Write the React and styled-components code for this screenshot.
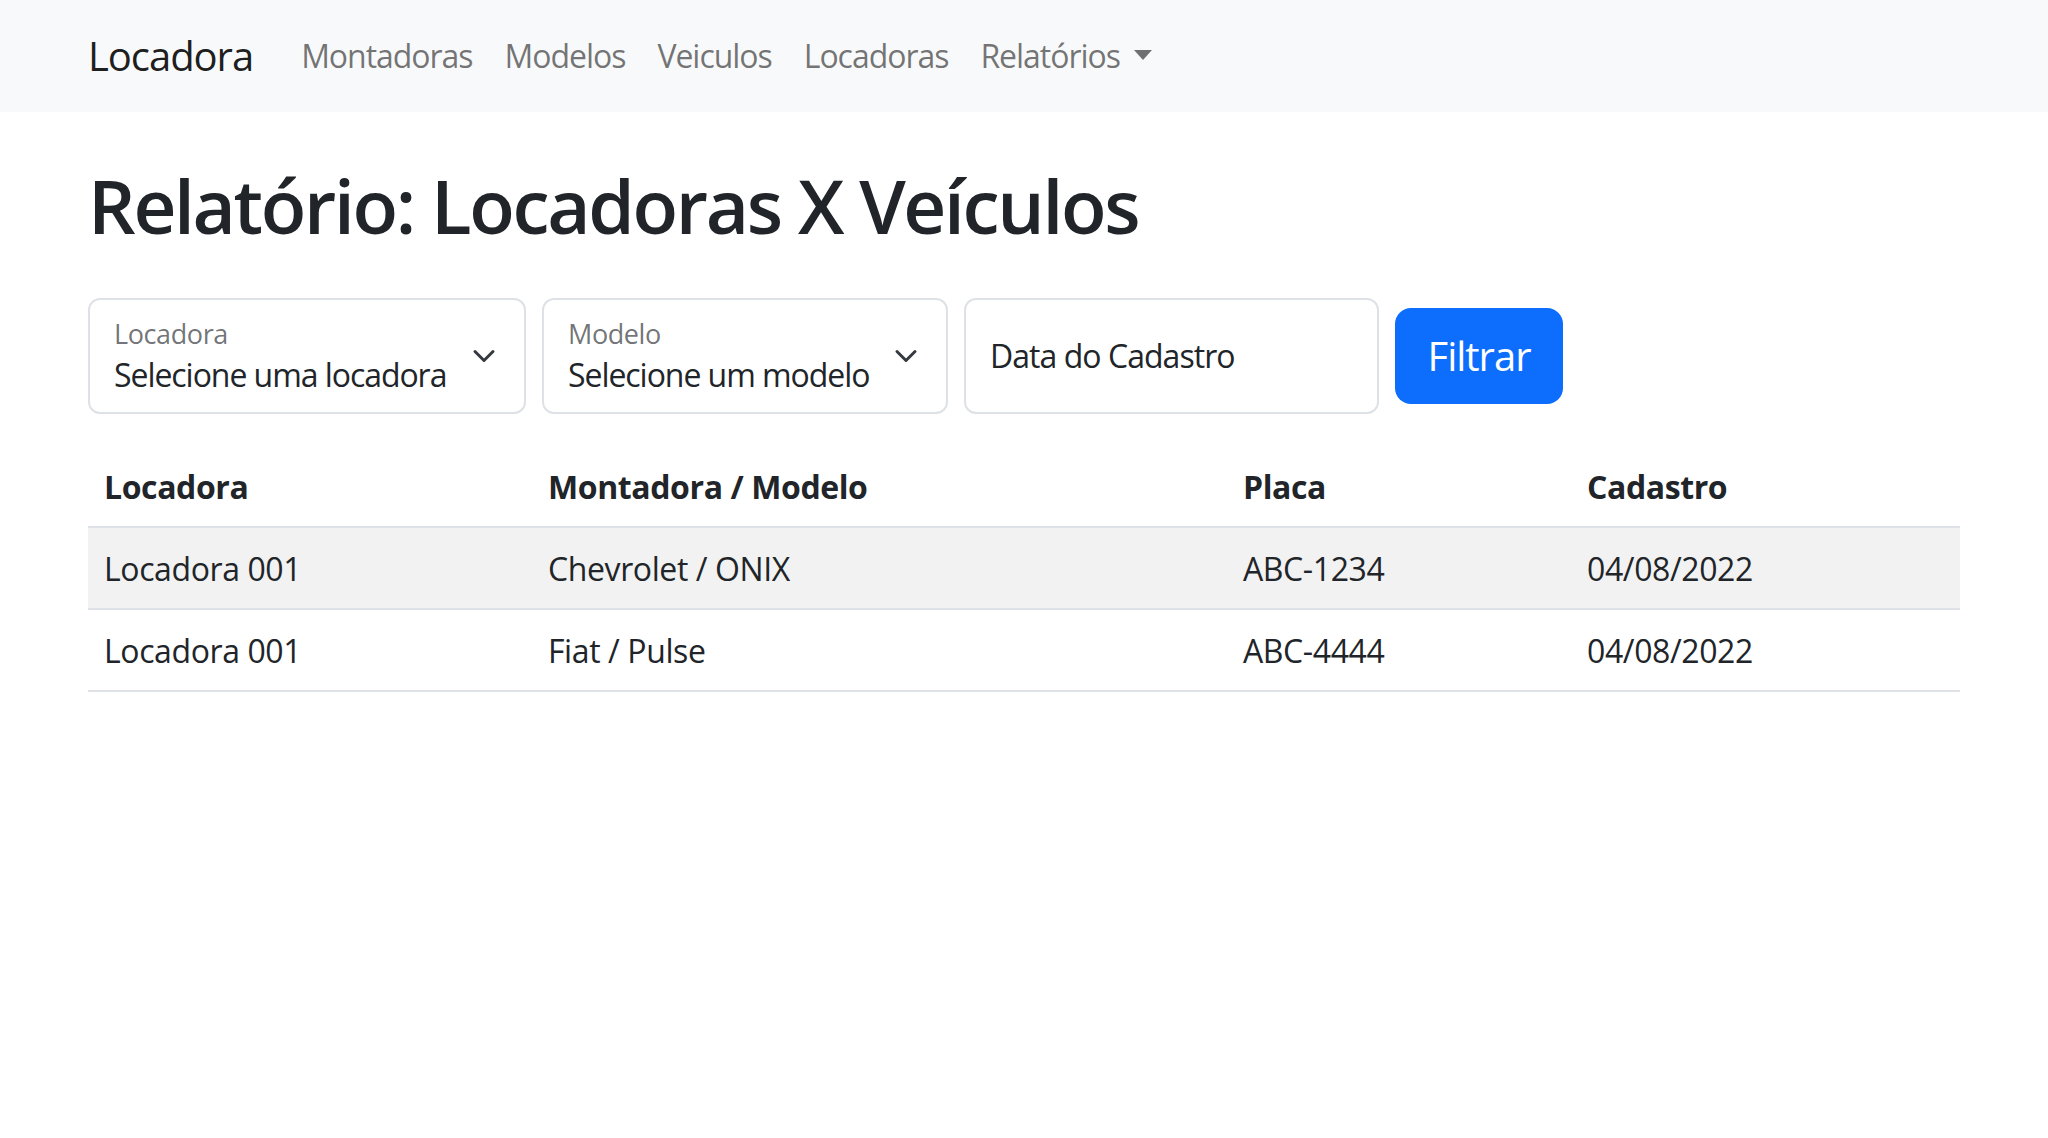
import React from "react";
import styled, { createGlobalStyle } from "styled-components";

const GlobalStyle = createGlobalStyle`
    * {
        box-sizing: border-box;
    }
    body {
        margin: 0;
        background: #fff;
        color: #212529;
        font-family: "Open Sans", "Noto Sans", sans-serif;
        letter-spacing: -0.025em;
    }
`;

const rows = [
    { locadora: "Locadora 001", modelo: "Chevrolet / ONIX", placa: "ABC-1234", cadastro: "04/08/2022" },
    { locadora: "Locadora 001", modelo: "Fiat / Pulse", placa: "ABC-4444", cadastro: "04/08/2022" },
];

function App() {
    return (
        <>
            <GlobalStyle />
            <Navbar>
                <Container>
                    <Brand>Locadora</Brand>
                    <NavList>
                        <NavLink>Montadoras</NavLink>
                        <NavLink>Modelos</NavLink>
                        <NavLink>Veiculos</NavLink>
                        <NavLink>Locadoras</NavLink>
                        <NavLink dropdown>Relatórios</NavLink>
                    </NavList>
                </Container>
            </Navbar>

            <Container column>
                <Title>Relatório: Locadoras X Veículos</Title>

                <FilterRow>
                    <SelectField width={438}>
                        <FieldText>
                            <FloatLabel>Locadora</FloatLabel>
                            <FieldValue>Selecione uma locadora</FieldValue>
                        </FieldText>
                        <Chevron />
                    </SelectField>
                    <SelectField width={406}>
                        <FieldText>
                            <FloatLabel>Modelo</FloatLabel>
                            <FieldValue>Selecione um modelo</FieldValue>
                        </FieldText>
                        <Chevron />
                    </SelectField>
                    <DateField>Data do Cadastro</DateField>
                    <FilterButton>Filtrar</FilterButton>
                </FilterRow>

                <Table>
                    <thead>
                        <tr>
                            <Th width={444}>Locadora</Th>
                            <Th width={695}>Montadora / Modelo</Th>
                            <Th width={344}>Placa</Th>
                            <Th width={389}>Cadastro</Th>
                        </tr>
                    </thead>
                    <tbody>
                        {rows.map((r, i) => (
                            <Tr key={i} striped={i % 2 === 0}>
                                <Td>{r.locadora}</Td>
                                <Td>{r.modelo}</Td>
                                <Td>{r.placa}</Td>
                                <Td>{r.cadastro}</Td>
                            </Tr>
                        ))}
                    </tbody>
                </Table>
            </Container>
        </>
    );
}

function Chevron() {
    return (
        <ChevronIcon viewBox="0 0 16 16" width="24" height="24">
            <path d="m2 5 6 6 6-6" fill="none" stroke="#343a40" strokeWidth="2" strokeLinecap="round" strokeLinejoin="round" />
        </ChevronIcon>
    );
}

export default App;

const Navbar = styled.nav`
    background-color: #f8f9fa;
    padding: 16px 0;
    letter-spacing: -0.065em;
`;

const Container = styled.div`
    width: 1920px;
    margin: 0 auto;
    padding: 0 24px;
    display: flex;
    flex-direction: ${(props) => (props.column ? "column" : "row")};
    align-items: ${(props) => (props.column ? "stretch" : "center")};
`;

const Brand = styled.a`
    font-size: 40px;
    line-height: 60px;
    padding: 10px 0;
    margin-right: 32px;
    color: rgba(0, 0, 0, 0.9);
`;

const NavList = styled.div`
    display: flex;
    align-items: center;
`;

const NavLink = styled.a`
    font-size: 32px;
    line-height: 48px;
    padding: 16px;
    color: rgba(0, 0, 0, 0.55);
    ${(props) =>
        props.dropdown &&
        `
        &::after {
            content: "";
            display: inline-block;
            margin-left: 14px;
            vertical-align: 8px;
            border-top: 10px solid;
            border-left: 9.6px solid transparent;
            border-right: 9.6px solid transparent;
        }
    `}
`;

const Title = styled.h1`
    font-size: 74.7px;
    font-weight: 600;
    line-height: 1.2;
    letter-spacing: -0.031em;
    margin: 49px 0 47px;
    color: #212529;
`;

const FilterRow = styled.div`
    display: flex;
    align-items: center;
    gap: 16px;
`;

const Box = styled.div`
    height: 116px;
    border: 2px solid #dee2e6;
    border-radius: 12px;
    background: #fff;
`;

const SelectField = styled(Box)`
    width: ${(props) => props.width}px;
    display: flex;
    align-items: center;
    padding: 0 28px 0 24px;
`;

const FieldText = styled.div`
    flex: 1;
    display: flex;
    flex-direction: column;
    align-self: stretch;
    padding-top: 20px;
`;

const FloatLabel = styled.div`
    font-size: 27px;
    line-height: 1;
    color: rgba(33, 37, 41, 0.65);
`;

const FieldValue = styled.div`
    font-size: 32px;
    line-height: 1;
    margin-top: 12px;
    letter-spacing: -0.033em;
    color: #212529;
    white-space: nowrap;
`;

const ChevronIcon = styled.svg`
    flex-shrink: 0;
    margin-left: 8px;
`;

const DateField = styled(Box)`
    width: 415px;
    display: flex;
    align-items: center;
    padding: 0 24px;
    font-size: 32px;
    letter-spacing: -0.03em;
    color: #212529;
`;

const FilterButton = styled.button`
    width: 168px;
    height: 96px;
    border: none;
    border-radius: 16px;
    background-color: #0d6efd;
    color: #fff;
    font-family: inherit;
    font-size: 40px;
    letter-spacing: -0.025em;
    cursor: pointer;
`;

const Table = styled.table`
    width: 1872px;
    margin-top: 32px;
    border-collapse: collapse;
    table-layout: fixed;
    font-size: 32px;
    line-height: 48px;
    color: #212529;
`;

const Th = styled.th`
    width: ${(props) => props.width}px;
    text-align: left;
    font-weight: 700;
    padding: 17px 16px 15px;
    border-bottom: 2px solid #dee2e6;
`;

const Tr = styled.tr`
    background-color: ${(props) => (props.striped ? "#f2f2f2" : "transparent")};
    border-bottom: 2px solid #dee2e6;
`;

const Td = styled.td`
    padding: 17px 16px 15px;
`;
